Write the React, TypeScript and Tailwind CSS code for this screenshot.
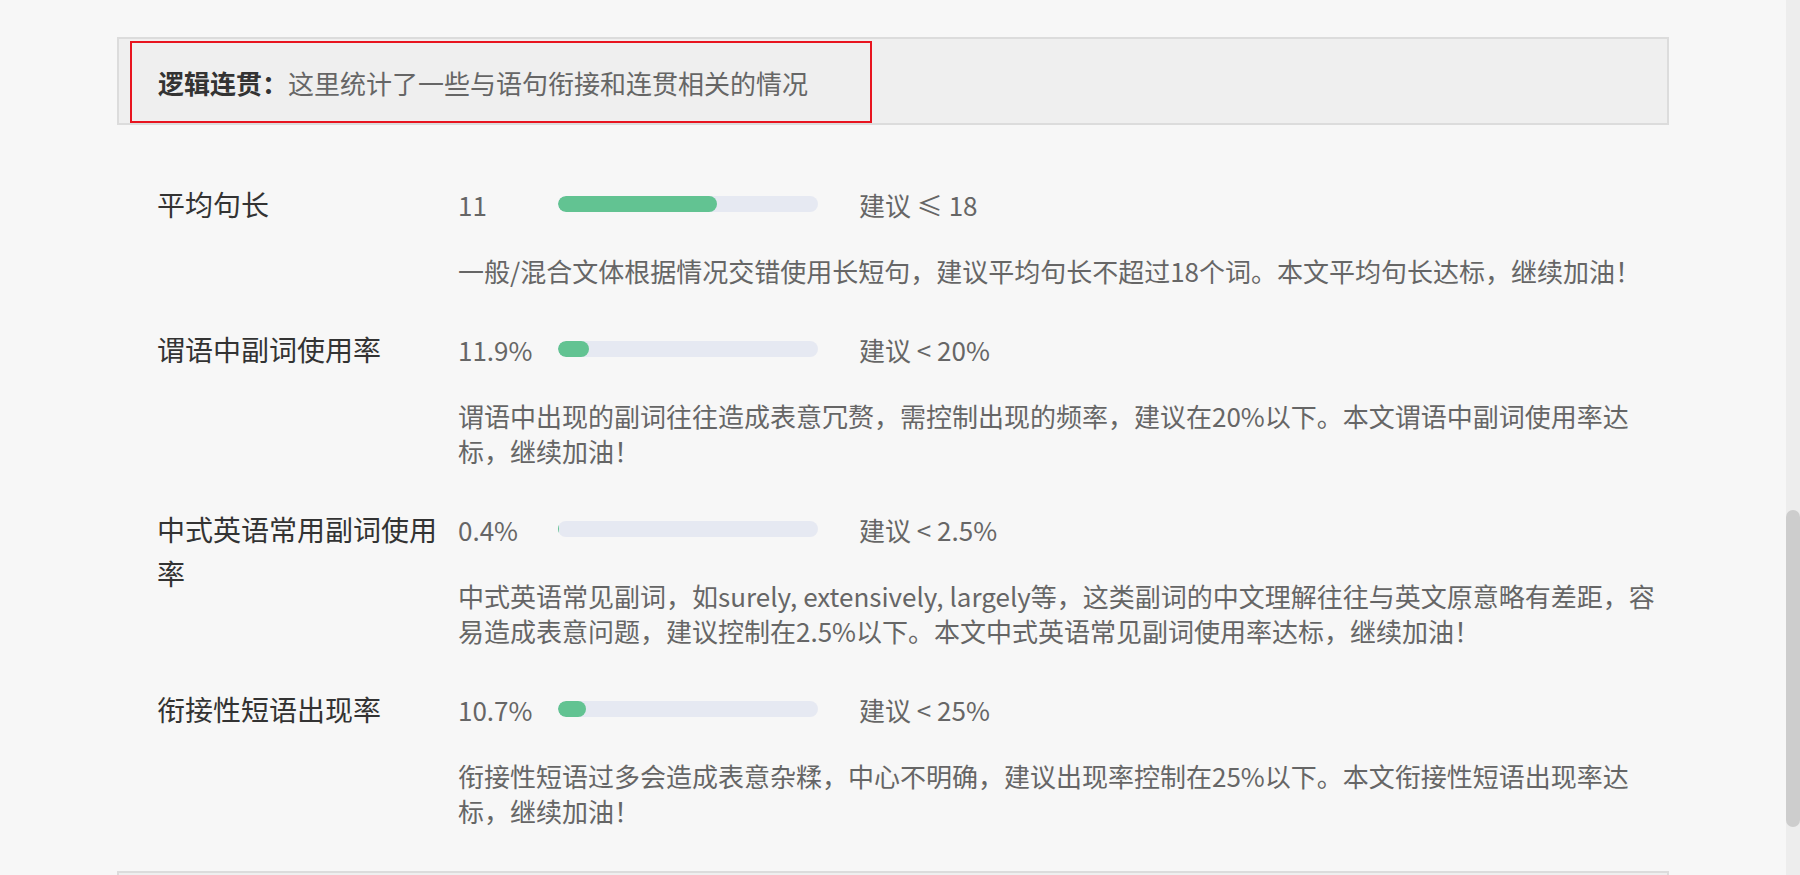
import React from "react"

type Metric = {
  label: string
  value: string
  percent: number
  advice: string
  desc: string
}

const METRICS: Metric[] = [
  {
    label: "平均句长",
    value: "11",
    percent: 61.1,
    advice: "建议 ≤ 18",
    desc: "一般/混合文体根据情况交错使用长短句，建议平均句长不超过18个词。本文平均句长达标，继续加油！",
  },
  {
    label: "谓语中副词使用率",
    value: "11.9%",
    percent: 11.9,
    advice: "建议 < 20%",
    desc: "谓语中出现的副词往往造成表意冗赘，需控制出现的频率，建议在20%以下。本文谓语中副词使用率达标，继续加油！",
  },
  {
    label: "中式英语常用副词使用率",
    value: "0.4%",
    percent: 0.4,
    advice: "建议 < 2.5%",
    desc: "中式英语常见副词，如surely, extensively, largely等，这类副词的中文理解往往与英文原意略有差距，容易造成表意问题，建议控制在2.5%以下。本文中式英语常见副词使用率达标，继续加油！",
  },
  {
    label: "衔接性短语出现率",
    value: "10.7%",
    percent: 10.7,
    advice: "建议 < 25%",
    desc: "衔接性短语过多会造成表意杂糅，中心不明确，建议出现率控制在25%以下。本文衔接性短语出现率达标，继续加油！",
  },
]

const MetricRow = ({ m }: { m: Metric }) => (
  <div className="flex">
    {/* label column */}
    <div className="w-[301px] shrink-0 pr-2 text-[28px] leading-[44px] text-[#333]">{m.label}</div>

    <div className="w-[1198px]">
      <div className="flex h-[44px] items-center text-[26px] text-[#666]">
        <span className="w-[100px] shrink-0">{m.value}</span>
        <div className="h-[16px] w-[260px] shrink-0 overflow-hidden rounded-full bg-[#e6e9f2]">
          <div className="h-full rounded-full bg-[#62c392]" style={{ width: `${m.percent}%` }} />
        </div>
        <span className="ml-[41px]">{m.advice}</span>
      </div>
      <p className="mt-[27px] text-[26px] leading-[35px] text-[#666]">{m.desc}</p>
    </div>
  </div>
)

export default function App() {
  return (
    <div
      className="flex h-[875px] w-full overflow-hidden bg-[#f7f7f7]"
      style={{ fontFamily: '"Noto Sans CJK SC", "Noto Sans", sans-serif' }}
    >
      <main className="flex-1 px-[117px] pt-[37px]">
        {/* section header */}
        <div className="h-[88px] border-2 border-[#dcdcdc] bg-[#efefef] pl-[11px] pt-[2px]">
          <div className="flex h-[82px] w-[742px] items-center border-2 border-[#e8141f] pl-[26px] text-[26px]">
            <span className="font-bold text-[#333]">逻辑连贯：</span>
            <span className="text-[#666]">这里统计了一些与语句衔接和连贯相关的情况</span>
          </div>
        </div>

        <div className="mt-[57px] flex flex-col gap-[39px] pl-[40px]">
          {METRICS.map((m) => (
            <MetricRow key={m.label} m={m} />
          ))}
        </div>

        {/* next section, cut off */}
        <div className="mt-[43px] h-[60px] border-2 border-[#dcdcdc] bg-[#efefef]" />
      </main>

      {/* scrollbar */}
      <aside className="w-[14px] shrink-0 bg-[#ededed] pt-[510px]">
        <div className="h-[317px] rounded-full bg-[#cdcdcd]" />
      </aside>
    </div>
  )
}
